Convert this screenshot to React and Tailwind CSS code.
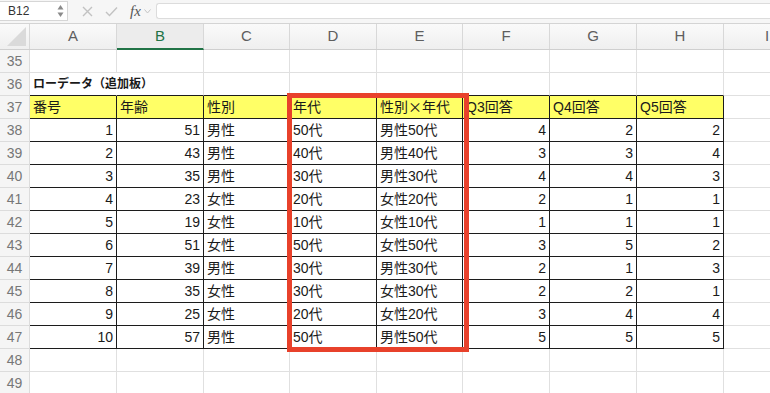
import React from 'react';

const COLS = ['A', 'B', 'C', 'D', 'E', 'F', 'G', 'H', 'I'];
const ROWS = [35, 36, 37, 38, 39, 40, 41, 42, 43, 44, 45, 46, 47, 48, 49];

const HEAD = ['番号', '年齢', '性別', '年代', '性別×年代', 'Q3回答', 'Q4回答', 'Q5回答'];
const DATA = [
  [1, 51, '男性', '50代', '男性50代', 4, 2, 2],
  [2, 43, '男性', '40代', '男性40代', 3, 3, 4],
  [3, 35, '男性', '30代', '男性30代', 4, 4, 3],
  [4, 23, '女性', '20代', '女性20代', 2, 1, 1],
  [5, 19, '女性', '10代', '女性10代', 1, 1, 1],
  [6, 51, '女性', '50代', '女性50代', 3, 5, 2],
  [7, 39, '男性', '30代', '男性30代', 2, 1, 3],
  [8, 35, '女性', '30代', '女性30代', 2, 2, 1],
  [9, 25, '女性', '20代', '女性20代', 3, 4, 4],
  [10, 57, '男性', '50代', '男性50代', 5, 5, 5],
];

const GRID = 'grid grid-cols-[30px_87px_87px_86px_87px_86px_87px_87px_87px_87px]';

function TopBar() {
  return (
    <div className="h-6 flex items-center bg-[#f6f6f6] border-b border-[#d4d4d4] shadow-[0_1px_0_#ececec]">
      <div className="h-[20px] w-[68px] flex items-center justify-between bg-white border border-[#d6d6d6] border-l-0 pl-2 pr-[3px] mb-[2px]">
        <span className="text-[12px] text-[#333]">B12</span>
        <svg width="7" height="14" viewBox="0 0 7 14">
          <path d="M3.5 1 L6.5 5.5 L0.5 5.5 Z" fill="#8a8a8a" />
          <path d="M3.5 13 L6.5 8.5 L0.5 8.5 Z" fill="#8a8a8a" />
        </svg>
      </div>
      <div className="flex items-center ml-[14px] gap-[12px]">
        <svg width="11" height="11" viewBox="0 0 11 11">
          <path d="M1 1 L10 10 M10 1 L1 10" stroke="#c2c2c2" strokeWidth="1.4" />
        </svg>
        <svg width="13" height="11" viewBox="0 0 13 11">
          <path d="M1 6 L4.5 9.5 L12 1.5" stroke="#c2c2c2" strokeWidth="1.4" fill="none" />
        </svg>
        <div className="flex items-center gap-[3px]">
          <span className="font-['Liberation_Serif',serif] italic text-[15px] text-[#555] leading-none">fx</span>
          <svg width="7" height="5" viewBox="0 0 7 5">
            <path d="M0.5 0.5 L3.5 4 L6.5 0.5" stroke="#c4c4c4" strokeWidth="1" fill="none" />
          </svg>
        </div>
      </div>
      <div className="ml-[5px] flex-1 h-[16px] bg-white border border-[#dcdcdc] border-r-0 rounded-l-[3px] mb-[1px]" />
    </div>
  );
}

function HeaderRow() {
  return (
    <div className={`${GRID} h-[26px] bg-gradient-to-b from-[#fafafa] to-[#efefef] border-b border-[#cfcfcf]`}>
      <div className="relative border-r border-[#d8d8d8]">
        <svg className="absolute right-[3px] bottom-[3px]" width="19" height="19" viewBox="0 0 19 19">
          <path d="M19 0 L19 19 L0 19 Z" fill="#dadada" />
        </svg>
      </div>
      {COLS.map((c) =>
        c === 'B' ? (
          <div
            key={c}
            className="flex items-center justify-center text-[15px] text-[#217346] border-r border-[#d8d8d8] border-b-2 border-b-[#217346] bg-[#ececec] -mb-px"
          >
            {c}
          </div>
        ) : (
          <div key={c} className="flex items-center justify-center text-[15px] text-[#5e5e5e] border-r border-[#d8d8d8]">
            {c}
          </div>
        )
      )}
    </div>
  );
}

function cellContent(r, ci) {
  if (r === 36 && ci === 0) {
    return <span className="font-bold text-[12px] whitespace-nowrap">ローデータ（追加板）</span>;
  }
  if (r === 37 && ci < 8) {
    const t = HEAD[ci];
    if (t === '性別×年代') {
      return (
        <span className="whitespace-nowrap">
          性別<span className="font-['Noto_Sans_CJK_JP',sans-serif]">×</span>年代
        </span>
      );
    }
    return <span className="whitespace-nowrap">{t}</span>;
  }
  if (r >= 38 && r <= 47 && ci < 8) {
    return DATA[r - 38][ci];
  }
  return null;
}

function Cell({ r, ci }) {
  const inTable = r >= 37 && r <= 47 && ci < 8;
  const blackBottom = r >= 36 && r <= 47 && ci < 8;
  const numeric = r >= 38 && r <= 47 && [0, 1, 5, 6, 7].includes(ci);
  const title = r === 36 && ci === 0;

  const right = inTable ? 'border-r-[#1c1c1c]' : title ? 'border-r-transparent' : 'border-r-[#e0e0e0]';
  const bottom = blackBottom ? 'border-b-[#1c1c1c]' : 'border-b-[#e0e0e0]';
  const bg = r === 37 && ci < 8 ? 'bg-[#ffff66]' : '';
  const align = numeric ? 'justify-end pr-[3px]' : 'justify-start pl-[3px]';
  const z = title ? 'relative z-10 overflow-visible' : 'overflow-hidden';

  return (
    <div className={`flex items-center border-r border-b ${right} ${bottom} ${bg} ${align} ${z}`}>
      {cellContent(r, ci)}
    </div>
  );
}

export default function App() {
  return (
    <div className="w-[770px] h-[393px] overflow-hidden bg-white font-['Liberation_Sans','Noto_Sans_CJK_JP',sans-serif] text-[#1a1a1a]">
      <TopBar />
      <div className="relative">
        <HeaderRow />
        {ROWS.map((r) => (
          <div key={r} className={`${GRID} h-[23px] text-[14px]`}>
            <div className="flex items-center justify-center bg-[#f5f5f5] border-r border-b border-[#dcdcdc] text-[14px] text-[#777]">
              {r}
            </div>
            {COLS.map((c, ci) => (
              <Cell key={c} r={r} ci={ci} />
            ))}
          </div>
        ))}
        <div className="absolute left-[287px] top-[69px] w-[182px] h-[259px] border-[5px] border-[#e8412b] pointer-events-none" />
      </div>
    </div>
  );
}
